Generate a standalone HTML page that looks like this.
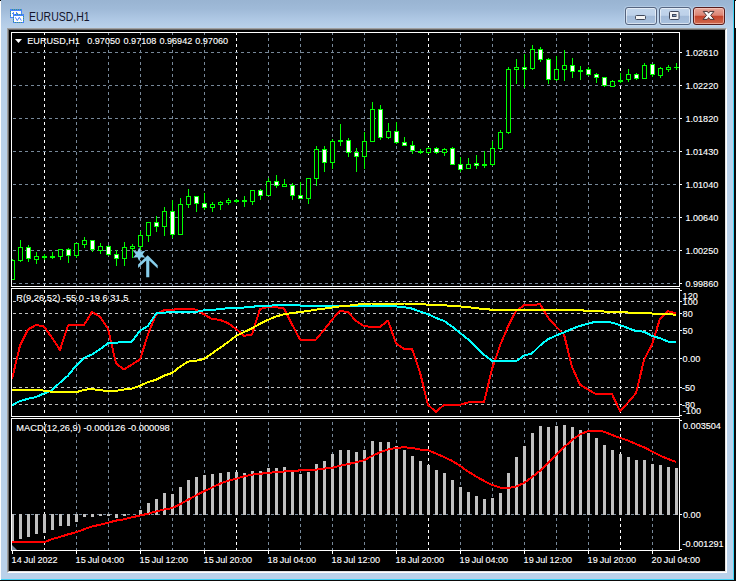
<!DOCTYPE html>
<html lang="en">
<head>
<meta charset="utf-8">
<title>EURUSD,H1</title>
<style>
html,body{margin:0;padding:0;background:#000;}
body{width:736px;height:581px;overflow:hidden;position:relative;font-family:"Liberation Sans",Arial,sans-serif;}
.window{position:absolute;left:0;top:0;width:736px;height:581px;background:#b9d1ea;overflow:hidden;}
.titlebar{position:absolute;left:0;top:0;width:736px;height:28px;background:linear-gradient(#99b4d2 0,#9fbad8 9px,#b0c9e5 20px,#b9d1ea 28px);}
.edge-l{position:absolute;left:0;top:1px;width:1px;height:580px;background:#fdfdfd;}
.edge-tl{position:absolute;left:0;top:0;width:1px;height:1px;background:#000;}
.edge-r1{position:absolute;left:733px;top:0;width:1px;height:580px;background:#3fd2f5;}
.edge-r2{position:absolute;left:734px;top:0;width:2px;height:581px;background:#0a0a0a;}
.edge-r3{position:absolute;left:735px;top:1px;width:1px;height:27px;background:#fbfbfb;}
.edge-b1{position:absolute;left:1px;top:579px;width:733px;height:1px;background:#3fd2f5;}
.edge-b2{position:absolute;left:0;top:580px;width:736px;height:1px;background:#0a0a0a;}
.client{position:absolute;left:7px;top:28px;width:716px;height:541px;border-style:solid;border-width:2px;border-color:#a0a0a0 #fff #fff #a0a0a0;background:#000;}
.client:before{content:"";position:absolute;left:-1px;top:-1px;right:-1px;bottom:-1px;border-style:solid;border-width:1px;border-color:#696969 #e3e3e3 #e3e3e3 #696969;}
.title{position:absolute;left:29px;top:9px;height:16px;line-height:16px;font-size:12.5px;color:#14142a;white-space:nowrap;transform-origin:0 50%;transform:scaleX(.84);}
.icon{position:absolute;left:9px;top:8px;width:17px;height:16px;}
.btn{position:absolute;top:7px;width:30px;height:16px;border:1px solid #55647f;border-radius:3px;box-shadow:inset 0 0 0 1px rgba(255,255,255,.55),0 0 0 1px rgba(220,235,250,.35);background:linear-gradient(#c3d6ec 0,#bdd1e9 46%,#a2bad8 50%,#a9c1de 100%);}
.btn.min{left:625px;}
.btn.max{left:659px;}
.btn.close{left:693px;border-color:#571b1b;box-shadow:inset 0 0 0 1px rgba(255,210,200,.6),0 0 0 1px rgba(220,235,250,.35);background:linear-gradient(#e7a99c 0,#dc8474 46%,#c4422a 50%,#cf6a50 100%);}
.btn svg{position:absolute;left:0;top:0;}
svg.chart{position:absolute;left:0;top:0;}
</style>
</head>
<body>
<div class="window">
  <div class="titlebar">
    <svg class="icon" viewBox="9 8 17 16">
      <g shape-rendering="crispEdges">
      <rect x="10" y="9" width="12" height="9" fill="#4783ff"/>
      <rect x="11" y="11" width="10" height="6" fill="#fffef2"/>
      <path d="M12 13.5h1 M13 12.5h1 M13 13.5h1 M16 12.5h1 M16 13.5h2 M17 14.5h1" stroke="#4783ff" fill="none"/>
      <rect x="13" y="14" width="11" height="9" fill="#4783ff"/>
      <rect x="14" y="16" width="9" height="6" fill="#ffffff"/>
      <path d="M12 9.5h1M14 9.5h1M16 9.5h1M18 9.5h1M20 9.5h1 M10.5 11v1M10.5 13v1M10.5 15v1 M15 14.5h1M17 14.5h1M19 14.5h1M21 14.5h1M13.5 17v1M13.5 19v1M13.5 21v1 M23.5 16v1M23.5 18v1M23.5 20v1 M15 22.5h1M17 22.5h1M19 22.5h1M21 22.5h1" stroke="#3f9a7a" fill="none"/>
      </g>
      <path d="M15.3 17.3 L17.3 20.6 L19.3 17.3 L21.4 20.6" stroke="#4783ff" stroke-width="1" fill="none"/>
    </svg>
    <span class="title">EURUSD,H1</span>
    <div class="btn min"><svg width="30" height="16" viewBox="0 0 30 16"><rect x="9.5" y="7.5" width="10" height="4" rx="1" fill="#f4f4f4" stroke="#40485a"/></svg></div>
    <div class="btn max"><svg width="30" height="16" viewBox="0 0 30 16"><rect x="9.5" y="3.5" width="9.5" height="8" rx="1" fill="#f4f4f4" stroke="#40485a"/><rect x="12.5" y="6.5" width="3.5" height="2" fill="#7f97b8" stroke="#40485a"/></svg></div>
    <div class="btn close"><svg width="30" height="16" viewBox="0 0 30 16"><path d="M9.2 3.4 H13.4 L14.6 5.2 L15.8 3.4 H20 L16.7 7.4 L20.2 11.4 H15.9 L14.6 9.6 L13.3 11.4 H9 L12.5 7.4 Z" fill="#fafafa" stroke="#4a3434" stroke-width="1" stroke-linejoin="round"/></svg></div>
  </div>
  <div class="client"></div>
  <div class="edge-l"></div><div class="edge-tl"></div>
  <div class="edge-r1"></div><div class="edge-r2"></div><div class="edge-r3"></div><div class="edge-b1"></div><div class="edge-b2"></div>
  <svg class="chart" width="736" height="581" viewBox="0 0 736 581">
<defs>
<clipPath id="cm"><rect x="12" y="33" width="667" height="253"/></clipPath>
<clipPath id="c1"><rect x="12" y="289" width="667" height="127"/></clipPath>
<clipPath id="c2"><rect x="12" y="419" width="667" height="131"/></clipPath>
</defs>
<rect x="9" y="30" width="716" height="541" fill="#000"/>
<g shape-rendering="crispEdges" fill="none" stroke-width="1">
<line x1="44.5" y1="33" x2="44.5" y2="286" stroke="#ffffff" stroke-dasharray="3 3" stroke-dashoffset="1"/>
<line x1="44.5" y1="289" x2="44.5" y2="416" stroke="#ffffff" stroke-dasharray="3 3" stroke-dashoffset="5"/>
<line x1="44.5" y1="419" x2="44.5" y2="550" stroke="#ffffff" stroke-dasharray="3 3" stroke-dashoffset="3"/>
<line x1="76.5" y1="33" x2="76.5" y2="286" stroke="#778899" stroke-dasharray="3 3" stroke-dashoffset="1"/>
<line x1="76.5" y1="289" x2="76.5" y2="416" stroke="#778899" stroke-dasharray="3 3" stroke-dashoffset="5"/>
<line x1="76.5" y1="419" x2="76.5" y2="550" stroke="#778899" stroke-dasharray="3 3" stroke-dashoffset="3"/>
<line x1="108.5" y1="33" x2="108.5" y2="286" stroke="#778899" stroke-dasharray="3 3" stroke-dashoffset="1"/>
<line x1="108.5" y1="289" x2="108.5" y2="416" stroke="#778899" stroke-dasharray="3 3" stroke-dashoffset="5"/>
<line x1="108.5" y1="419" x2="108.5" y2="550" stroke="#778899" stroke-dasharray="3 3" stroke-dashoffset="3"/>
<line x1="140.5" y1="33" x2="140.5" y2="286" stroke="#778899" stroke-dasharray="3 3" stroke-dashoffset="1"/>
<line x1="140.5" y1="289" x2="140.5" y2="416" stroke="#778899" stroke-dasharray="3 3" stroke-dashoffset="5"/>
<line x1="140.5" y1="419" x2="140.5" y2="550" stroke="#778899" stroke-dasharray="3 3" stroke-dashoffset="3"/>
<line x1="172.5" y1="33" x2="172.5" y2="286" stroke="#778899" stroke-dasharray="3 3" stroke-dashoffset="1"/>
<line x1="172.5" y1="289" x2="172.5" y2="416" stroke="#778899" stroke-dasharray="3 3" stroke-dashoffset="5"/>
<line x1="172.5" y1="419" x2="172.5" y2="550" stroke="#778899" stroke-dasharray="3 3" stroke-dashoffset="3"/>
<line x1="204.5" y1="33" x2="204.5" y2="286" stroke="#778899" stroke-dasharray="3 3" stroke-dashoffset="1"/>
<line x1="204.5" y1="289" x2="204.5" y2="416" stroke="#778899" stroke-dasharray="3 3" stroke-dashoffset="5"/>
<line x1="204.5" y1="419" x2="204.5" y2="550" stroke="#778899" stroke-dasharray="3 3" stroke-dashoffset="3"/>
<line x1="236.5" y1="33" x2="236.5" y2="286" stroke="#ffffff" stroke-dasharray="3 3" stroke-dashoffset="1"/>
<line x1="236.5" y1="289" x2="236.5" y2="416" stroke="#ffffff" stroke-dasharray="3 3" stroke-dashoffset="5"/>
<line x1="236.5" y1="419" x2="236.5" y2="550" stroke="#ffffff" stroke-dasharray="3 3" stroke-dashoffset="3"/>
<line x1="268.5" y1="33" x2="268.5" y2="286" stroke="#778899" stroke-dasharray="3 3" stroke-dashoffset="1"/>
<line x1="268.5" y1="289" x2="268.5" y2="416" stroke="#778899" stroke-dasharray="3 3" stroke-dashoffset="5"/>
<line x1="268.5" y1="419" x2="268.5" y2="550" stroke="#778899" stroke-dasharray="3 3" stroke-dashoffset="3"/>
<line x1="300.5" y1="33" x2="300.5" y2="286" stroke="#778899" stroke-dasharray="3 3" stroke-dashoffset="1"/>
<line x1="300.5" y1="289" x2="300.5" y2="416" stroke="#778899" stroke-dasharray="3 3" stroke-dashoffset="5"/>
<line x1="300.5" y1="419" x2="300.5" y2="550" stroke="#778899" stroke-dasharray="3 3" stroke-dashoffset="3"/>
<line x1="332.5" y1="33" x2="332.5" y2="286" stroke="#778899" stroke-dasharray="3 3" stroke-dashoffset="1"/>
<line x1="332.5" y1="289" x2="332.5" y2="416" stroke="#778899" stroke-dasharray="3 3" stroke-dashoffset="5"/>
<line x1="332.5" y1="419" x2="332.5" y2="550" stroke="#778899" stroke-dasharray="3 3" stroke-dashoffset="3"/>
<line x1="364.5" y1="33" x2="364.5" y2="286" stroke="#778899" stroke-dasharray="3 3" stroke-dashoffset="1"/>
<line x1="364.5" y1="289" x2="364.5" y2="416" stroke="#778899" stroke-dasharray="3 3" stroke-dashoffset="5"/>
<line x1="364.5" y1="419" x2="364.5" y2="550" stroke="#778899" stroke-dasharray="3 3" stroke-dashoffset="3"/>
<line x1="396.5" y1="33" x2="396.5" y2="286" stroke="#778899" stroke-dasharray="3 3" stroke-dashoffset="1"/>
<line x1="396.5" y1="289" x2="396.5" y2="416" stroke="#778899" stroke-dasharray="3 3" stroke-dashoffset="5"/>
<line x1="396.5" y1="419" x2="396.5" y2="550" stroke="#778899" stroke-dasharray="3 3" stroke-dashoffset="3"/>
<line x1="428.5" y1="33" x2="428.5" y2="286" stroke="#ffffff" stroke-dasharray="3 3" stroke-dashoffset="1"/>
<line x1="428.5" y1="289" x2="428.5" y2="416" stroke="#ffffff" stroke-dasharray="3 3" stroke-dashoffset="5"/>
<line x1="428.5" y1="419" x2="428.5" y2="550" stroke="#ffffff" stroke-dasharray="3 3" stroke-dashoffset="3"/>
<line x1="460.5" y1="33" x2="460.5" y2="286" stroke="#778899" stroke-dasharray="3 3" stroke-dashoffset="1"/>
<line x1="460.5" y1="289" x2="460.5" y2="416" stroke="#778899" stroke-dasharray="3 3" stroke-dashoffset="5"/>
<line x1="460.5" y1="419" x2="460.5" y2="550" stroke="#778899" stroke-dasharray="3 3" stroke-dashoffset="3"/>
<line x1="492.5" y1="33" x2="492.5" y2="286" stroke="#778899" stroke-dasharray="3 3" stroke-dashoffset="1"/>
<line x1="492.5" y1="289" x2="492.5" y2="416" stroke="#778899" stroke-dasharray="3 3" stroke-dashoffset="5"/>
<line x1="492.5" y1="419" x2="492.5" y2="550" stroke="#778899" stroke-dasharray="3 3" stroke-dashoffset="3"/>
<line x1="524.5" y1="33" x2="524.5" y2="286" stroke="#778899" stroke-dasharray="3 3" stroke-dashoffset="1"/>
<line x1="524.5" y1="289" x2="524.5" y2="416" stroke="#778899" stroke-dasharray="3 3" stroke-dashoffset="5"/>
<line x1="524.5" y1="419" x2="524.5" y2="550" stroke="#778899" stroke-dasharray="3 3" stroke-dashoffset="3"/>
<line x1="556.5" y1="33" x2="556.5" y2="286" stroke="#778899" stroke-dasharray="3 3" stroke-dashoffset="1"/>
<line x1="556.5" y1="289" x2="556.5" y2="416" stroke="#778899" stroke-dasharray="3 3" stroke-dashoffset="5"/>
<line x1="556.5" y1="419" x2="556.5" y2="550" stroke="#778899" stroke-dasharray="3 3" stroke-dashoffset="3"/>
<line x1="588.5" y1="33" x2="588.5" y2="286" stroke="#778899" stroke-dasharray="3 3" stroke-dashoffset="1"/>
<line x1="588.5" y1="289" x2="588.5" y2="416" stroke="#778899" stroke-dasharray="3 3" stroke-dashoffset="5"/>
<line x1="588.5" y1="419" x2="588.5" y2="550" stroke="#778899" stroke-dasharray="3 3" stroke-dashoffset="3"/>
<line x1="620.5" y1="33" x2="620.5" y2="286" stroke="#ffffff" stroke-dasharray="3 3" stroke-dashoffset="1"/>
<line x1="620.5" y1="289" x2="620.5" y2="416" stroke="#ffffff" stroke-dasharray="3 3" stroke-dashoffset="5"/>
<line x1="620.5" y1="419" x2="620.5" y2="550" stroke="#ffffff" stroke-dasharray="3 3" stroke-dashoffset="3"/>
<line x1="652.5" y1="33" x2="652.5" y2="286" stroke="#778899" stroke-dasharray="3 3" stroke-dashoffset="1"/>
<line x1="652.5" y1="289" x2="652.5" y2="416" stroke="#778899" stroke-dasharray="3 3" stroke-dashoffset="5"/>
<line x1="652.5" y1="419" x2="652.5" y2="550" stroke="#778899" stroke-dasharray="3 3" stroke-dashoffset="3"/>
<line x1="12" y1="52.5" x2="679" y2="52.5" stroke="#778899" stroke-dasharray="3 3" stroke-dashoffset="5"/>
<line x1="12" y1="85.5" x2="679" y2="85.5" stroke="#778899" stroke-dasharray="3 3" stroke-dashoffset="5"/>
<line x1="12" y1="118.5" x2="679" y2="118.5" stroke="#778899" stroke-dasharray="3 3" stroke-dashoffset="5"/>
<line x1="12" y1="151.5" x2="679" y2="151.5" stroke="#778899" stroke-dasharray="3 3" stroke-dashoffset="5"/>
<line x1="12" y1="184.5" x2="679" y2="184.5" stroke="#778899" stroke-dasharray="3 3" stroke-dashoffset="5"/>
<line x1="12" y1="217.5" x2="679" y2="217.5" stroke="#778899" stroke-dasharray="3 3" stroke-dashoffset="5"/>
<line x1="12" y1="250.5" x2="679" y2="250.5" stroke="#778899" stroke-dasharray="3 3" stroke-dashoffset="5"/>
<line x1="12" y1="283.5" x2="679" y2="283.5" stroke="#778899" stroke-dasharray="3 3" stroke-dashoffset="5"/>
<line x1="12" y1="301.5" x2="679" y2="301.5" stroke="#c0c0c0" stroke-dasharray="3 3" stroke-dashoffset="5"/>
<line x1="12" y1="313.5" x2="679" y2="313.5" stroke="#c0c0c0" stroke-dasharray="3 3" stroke-dashoffset="5"/>
<line x1="12" y1="330.5" x2="679" y2="330.5" stroke="#c0c0c0" stroke-dasharray="3 3" stroke-dashoffset="5"/>
<line x1="12" y1="358.5" x2="679" y2="358.5" stroke="#c0c0c0" stroke-dasharray="3 3" stroke-dashoffset="5"/>
<line x1="12" y1="387.5" x2="679" y2="387.5" stroke="#c0c0c0" stroke-dasharray="3 3" stroke-dashoffset="5"/>
<line x1="12" y1="404.5" x2="679" y2="404.5" stroke="#c0c0c0" stroke-dasharray="3 3" stroke-dashoffset="5"/>
<line x1="12" y1="514.5" x2="679" y2="514.5" stroke="#778899" stroke-dasharray="3 3" stroke-dashoffset="5"/>
</g>
<g shape-rendering="crispEdges" clip-path="url(#cm)">
<rect x="12" y="259" width="1" height="21" fill="#00ff00"/>
<rect x="10" y="260" width="5" height="20" fill="#00ff00"/>
<rect x="11" y="261" width="3" height="18" fill="#000"/>
<rect x="20" y="240" width="1" height="22" fill="#00ff00"/>
<rect x="18" y="247" width="5" height="14" fill="#00ff00"/>
<rect x="19" y="248" width="3" height="12" fill="#000"/>
<rect x="28" y="245" width="1" height="17" fill="#00ff00"/>
<rect x="26" y="247" width="5" height="12" fill="#00ff00"/>
<rect x="27" y="248" width="3" height="10" fill="#fff"/>
<rect x="36" y="252" width="1" height="12" fill="#00ff00"/>
<rect x="34" y="256" width="5" height="4" fill="#00ff00"/>
<rect x="35" y="257" width="3" height="2" fill="#000"/>
<rect x="44" y="254" width="1" height="6" fill="#00ff00"/>
<rect x="42" y="256" width="5" height="2" fill="#00ff00"/>
<rect x="52" y="252" width="1" height="7" fill="#00ff00"/>
<rect x="50" y="256" width="5" height="2" fill="#00ff00"/>
<rect x="60" y="249" width="1" height="11" fill="#00ff00"/>
<rect x="58" y="249" width="5" height="8" fill="#00ff00"/>
<rect x="59" y="250" width="3" height="6" fill="#000"/>
<rect x="68" y="248" width="1" height="15" fill="#00ff00"/>
<rect x="66" y="249" width="5" height="7" fill="#00ff00"/>
<rect x="67" y="250" width="3" height="5" fill="#fff"/>
<rect x="76" y="243" width="1" height="15" fill="#00ff00"/>
<rect x="74" y="243" width="5" height="13" fill="#00ff00"/>
<rect x="75" y="244" width="3" height="11" fill="#000"/>
<rect x="84" y="237" width="1" height="11" fill="#00ff00"/>
<rect x="82" y="240" width="5" height="5" fill="#00ff00"/>
<rect x="83" y="241" width="3" height="3" fill="#000"/>
<rect x="92" y="240" width="1" height="12" fill="#00ff00"/>
<rect x="90" y="240" width="5" height="10" fill="#00ff00"/>
<rect x="91" y="241" width="3" height="8" fill="#fff"/>
<rect x="100" y="243" width="1" height="11" fill="#00ff00"/>
<rect x="98" y="246" width="5" height="5" fill="#00ff00"/>
<rect x="99" y="247" width="3" height="3" fill="#000"/>
<rect x="108" y="245" width="1" height="11" fill="#00ff00"/>
<rect x="106" y="246" width="5" height="9" fill="#00ff00"/>
<rect x="107" y="247" width="3" height="7" fill="#fff"/>
<rect x="116" y="250" width="1" height="16" fill="#00ff00"/>
<rect x="114" y="254" width="5" height="5" fill="#00ff00"/>
<rect x="115" y="255" width="3" height="3" fill="#fff"/>
<rect x="124" y="242" width="1" height="24" fill="#00ff00"/>
<rect x="122" y="247" width="5" height="12" fill="#00ff00"/>
<rect x="123" y="248" width="3" height="10" fill="#000"/>
<rect x="132" y="244" width="1" height="14" fill="#00ff00"/>
<rect x="130" y="246" width="5" height="3" fill="#00ff00"/>
<rect x="131" y="247" width="3" height="1" fill="#000"/>
<rect x="140" y="231" width="1" height="19" fill="#00ff00"/>
<rect x="138" y="235" width="5" height="12" fill="#00ff00"/>
<rect x="139" y="236" width="3" height="10" fill="#000"/>
<rect x="148" y="222" width="1" height="20" fill="#00ff00"/>
<rect x="146" y="222" width="5" height="14" fill="#00ff00"/>
<rect x="147" y="223" width="3" height="12" fill="#000"/>
<rect x="156" y="216" width="1" height="16" fill="#00ff00"/>
<rect x="154" y="222" width="5" height="5" fill="#00ff00"/>
<rect x="155" y="223" width="3" height="3" fill="#fff"/>
<rect x="164" y="207" width="1" height="29" fill="#00ff00"/>
<rect x="162" y="211" width="5" height="16" fill="#00ff00"/>
<rect x="163" y="212" width="3" height="14" fill="#000"/>
<rect x="172" y="200" width="1" height="38" fill="#00ff00"/>
<rect x="170" y="211" width="5" height="24" fill="#00ff00"/>
<rect x="171" y="212" width="3" height="22" fill="#fff"/>
<rect x="180" y="198" width="1" height="37" fill="#00ff00"/>
<rect x="178" y="204" width="5" height="31" fill="#00ff00"/>
<rect x="179" y="205" width="3" height="29" fill="#000"/>
<rect x="188" y="189" width="1" height="19" fill="#00ff00"/>
<rect x="186" y="196" width="5" height="9" fill="#00ff00"/>
<rect x="187" y="197" width="3" height="7" fill="#000"/>
<rect x="196" y="196" width="1" height="16" fill="#00ff00"/>
<rect x="194" y="196" width="5" height="8" fill="#00ff00"/>
<rect x="195" y="197" width="3" height="6" fill="#fff"/>
<rect x="204" y="193" width="1" height="17" fill="#00ff00"/>
<rect x="202" y="203" width="5" height="5" fill="#00ff00"/>
<rect x="203" y="204" width="3" height="3" fill="#fff"/>
<rect x="212" y="202" width="1" height="10" fill="#00ff00"/>
<rect x="210" y="204" width="5" height="4" fill="#00ff00"/>
<rect x="211" y="205" width="3" height="2" fill="#000"/>
<rect x="220" y="201" width="1" height="9" fill="#00ff00"/>
<rect x="218" y="202" width="5" height="3" fill="#00ff00"/>
<rect x="219" y="203" width="3" height="1" fill="#000"/>
<rect x="228" y="198" width="1" height="7" fill="#00ff00"/>
<rect x="226" y="200" width="5" height="3" fill="#00ff00"/>
<rect x="227" y="201" width="3" height="1" fill="#000"/>
<rect x="236" y="199" width="1" height="4" fill="#00ff00"/>
<rect x="234" y="200" width="5" height="2" fill="#00ff00"/>
<rect x="244" y="196" width="1" height="11" fill="#00ff00"/>
<rect x="242" y="200" width="5" height="2" fill="#00ff00"/>
<rect x="252" y="190" width="1" height="15" fill="#00ff00"/>
<rect x="250" y="190" width="5" height="12" fill="#00ff00"/>
<rect x="251" y="191" width="3" height="10" fill="#000"/>
<rect x="260" y="189" width="1" height="11" fill="#00ff00"/>
<rect x="258" y="190" width="5" height="6" fill="#00ff00"/>
<rect x="259" y="191" width="3" height="4" fill="#fff"/>
<rect x="268" y="178" width="1" height="18" fill="#00ff00"/>
<rect x="266" y="181" width="5" height="15" fill="#00ff00"/>
<rect x="267" y="182" width="3" height="13" fill="#000"/>
<rect x="276" y="175" width="1" height="13" fill="#00ff00"/>
<rect x="274" y="181" width="5" height="5" fill="#00ff00"/>
<rect x="275" y="182" width="3" height="3" fill="#fff"/>
<rect x="284" y="179" width="1" height="8" fill="#00ff00"/>
<rect x="282" y="184" width="5" height="3" fill="#00ff00"/>
<rect x="283" y="185" width="3" height="1" fill="#000"/>
<rect x="292" y="183" width="1" height="17" fill="#00ff00"/>
<rect x="290" y="185" width="5" height="11" fill="#00ff00"/>
<rect x="291" y="186" width="3" height="9" fill="#fff"/>
<rect x="300" y="182" width="1" height="17" fill="#00ff00"/>
<rect x="298" y="195" width="5" height="4" fill="#00ff00"/>
<rect x="299" y="196" width="3" height="2" fill="#fff"/>
<rect x="308" y="178" width="1" height="26" fill="#00ff00"/>
<rect x="306" y="178" width="5" height="21" fill="#00ff00"/>
<rect x="307" y="179" width="3" height="19" fill="#000"/>
<rect x="316" y="146" width="1" height="40" fill="#00ff00"/>
<rect x="314" y="149" width="5" height="30" fill="#00ff00"/>
<rect x="315" y="150" width="3" height="28" fill="#000"/>
<rect x="324" y="146" width="1" height="26" fill="#00ff00"/>
<rect x="322" y="149" width="5" height="14" fill="#00ff00"/>
<rect x="323" y="150" width="3" height="12" fill="#fff"/>
<rect x="332" y="139" width="1" height="30" fill="#00ff00"/>
<rect x="330" y="141" width="5" height="22" fill="#00ff00"/>
<rect x="331" y="142" width="3" height="20" fill="#000"/>
<rect x="340" y="124" width="1" height="22" fill="#00ff00"/>
<rect x="338" y="140" width="5" height="2" fill="#00ff00"/>
<rect x="348" y="138" width="1" height="19" fill="#00ff00"/>
<rect x="346" y="140" width="5" height="13" fill="#00ff00"/>
<rect x="347" y="141" width="3" height="11" fill="#fff"/>
<rect x="356" y="148" width="1" height="24" fill="#00ff00"/>
<rect x="354" y="152" width="5" height="5" fill="#00ff00"/>
<rect x="355" y="153" width="3" height="3" fill="#fff"/>
<rect x="364" y="132" width="1" height="37" fill="#00ff00"/>
<rect x="362" y="141" width="5" height="16" fill="#00ff00"/>
<rect x="363" y="142" width="3" height="14" fill="#000"/>
<rect x="372" y="102" width="1" height="40" fill="#00ff00"/>
<rect x="370" y="109" width="5" height="33" fill="#00ff00"/>
<rect x="371" y="110" width="3" height="31" fill="#000"/>
<rect x="380" y="105" width="1" height="35" fill="#00ff00"/>
<rect x="378" y="109" width="5" height="29" fill="#00ff00"/>
<rect x="379" y="110" width="3" height="27" fill="#fff"/>
<rect x="388" y="123" width="1" height="16" fill="#00ff00"/>
<rect x="386" y="131" width="5" height="7" fill="#00ff00"/>
<rect x="387" y="132" width="3" height="5" fill="#000"/>
<rect x="396" y="122" width="1" height="22" fill="#00ff00"/>
<rect x="394" y="131" width="5" height="12" fill="#00ff00"/>
<rect x="395" y="132" width="3" height="10" fill="#fff"/>
<rect x="404" y="137" width="1" height="9" fill="#00ff00"/>
<rect x="402" y="142" width="5" height="4" fill="#00ff00"/>
<rect x="403" y="143" width="3" height="2" fill="#fff"/>
<rect x="412" y="141" width="1" height="13" fill="#00ff00"/>
<rect x="410" y="145" width="5" height="6" fill="#00ff00"/>
<rect x="411" y="146" width="3" height="4" fill="#fff"/>
<rect x="420" y="149" width="1" height="5" fill="#00ff00"/>
<rect x="418" y="151" width="5" height="2" fill="#00ff00"/>
<rect x="428" y="147" width="1" height="7" fill="#00ff00"/>
<rect x="426" y="148" width="5" height="5" fill="#00ff00"/>
<rect x="427" y="149" width="3" height="3" fill="#000"/>
<rect x="436" y="147" width="1" height="7" fill="#00ff00"/>
<rect x="434" y="148" width="5" height="5" fill="#00ff00"/>
<rect x="435" y="149" width="3" height="3" fill="#fff"/>
<rect x="444" y="148" width="1" height="8" fill="#00ff00"/>
<rect x="442" y="149" width="5" height="4" fill="#00ff00"/>
<rect x="443" y="150" width="3" height="2" fill="#000"/>
<rect x="452" y="147" width="1" height="18" fill="#00ff00"/>
<rect x="450" y="148" width="5" height="17" fill="#00ff00"/>
<rect x="451" y="149" width="3" height="15" fill="#fff"/>
<rect x="460" y="157" width="1" height="15" fill="#00ff00"/>
<rect x="458" y="164" width="5" height="6" fill="#00ff00"/>
<rect x="459" y="165" width="3" height="4" fill="#fff"/>
<rect x="468" y="158" width="1" height="11" fill="#00ff00"/>
<rect x="466" y="164" width="5" height="5" fill="#00ff00"/>
<rect x="467" y="165" width="3" height="3" fill="#000"/>
<rect x="476" y="155" width="1" height="14" fill="#00ff00"/>
<rect x="474" y="163" width="5" height="3" fill="#00ff00"/>
<rect x="475" y="164" width="3" height="1" fill="#fff"/>
<rect x="484" y="151" width="1" height="17" fill="#00ff00"/>
<rect x="482" y="164" width="5" height="2" fill="#00ff00"/>
<rect x="492" y="141" width="1" height="25" fill="#00ff00"/>
<rect x="490" y="148" width="5" height="17" fill="#00ff00"/>
<rect x="491" y="149" width="3" height="15" fill="#000"/>
<rect x="500" y="130" width="1" height="20" fill="#00ff00"/>
<rect x="498" y="132" width="5" height="17" fill="#00ff00"/>
<rect x="499" y="133" width="3" height="15" fill="#000"/>
<rect x="508" y="67" width="1" height="67" fill="#00ff00"/>
<rect x="506" y="69" width="5" height="64" fill="#00ff00"/>
<rect x="507" y="70" width="3" height="62" fill="#000"/>
<rect x="516" y="59" width="1" height="25" fill="#00ff00"/>
<rect x="514" y="67" width="5" height="3" fill="#00ff00"/>
<rect x="515" y="68" width="3" height="1" fill="#000"/>
<rect x="524" y="54" width="1" height="34" fill="#00ff00"/>
<rect x="522" y="67" width="5" height="3" fill="#00ff00"/>
<rect x="523" y="68" width="3" height="1" fill="#fff"/>
<rect x="532" y="45" width="1" height="25" fill="#00ff00"/>
<rect x="530" y="49" width="5" height="20" fill="#00ff00"/>
<rect x="531" y="50" width="3" height="18" fill="#000"/>
<rect x="540" y="47" width="1" height="15" fill="#00ff00"/>
<rect x="538" y="49" width="5" height="11" fill="#00ff00"/>
<rect x="539" y="50" width="3" height="9" fill="#fff"/>
<rect x="548" y="58" width="1" height="26" fill="#00ff00"/>
<rect x="546" y="59" width="5" height="21" fill="#00ff00"/>
<rect x="547" y="60" width="3" height="19" fill="#fff"/>
<rect x="556" y="56" width="1" height="25" fill="#00ff00"/>
<rect x="554" y="69" width="5" height="11" fill="#00ff00"/>
<rect x="555" y="70" width="3" height="9" fill="#000"/>
<rect x="564" y="50" width="1" height="31" fill="#00ff00"/>
<rect x="562" y="65" width="5" height="5" fill="#00ff00"/>
<rect x="563" y="66" width="3" height="3" fill="#000"/>
<rect x="572" y="58" width="1" height="20" fill="#00ff00"/>
<rect x="570" y="65" width="5" height="7" fill="#00ff00"/>
<rect x="571" y="66" width="3" height="5" fill="#fff"/>
<rect x="580" y="66" width="1" height="14" fill="#00ff00"/>
<rect x="578" y="70" width="5" height="2" fill="#00ff00"/>
<rect x="588" y="67" width="1" height="9" fill="#00ff00"/>
<rect x="586" y="69" width="5" height="6" fill="#00ff00"/>
<rect x="587" y="70" width="3" height="4" fill="#fff"/>
<rect x="596" y="73" width="1" height="10" fill="#00ff00"/>
<rect x="594" y="74" width="5" height="4" fill="#00ff00"/>
<rect x="595" y="75" width="3" height="2" fill="#fff"/>
<rect x="604" y="77" width="1" height="10" fill="#00ff00"/>
<rect x="602" y="77" width="5" height="9" fill="#00ff00"/>
<rect x="603" y="78" width="3" height="7" fill="#fff"/>
<rect x="612" y="80" width="1" height="7" fill="#00ff00"/>
<rect x="610" y="81" width="5" height="6" fill="#00ff00"/>
<rect x="611" y="82" width="3" height="4" fill="#000"/>
<rect x="620" y="73" width="1" height="10" fill="#00ff00"/>
<rect x="618" y="80" width="5" height="2" fill="#00ff00"/>
<rect x="628" y="69" width="1" height="13" fill="#00ff00"/>
<rect x="626" y="74" width="5" height="6" fill="#00ff00"/>
<rect x="627" y="75" width="3" height="4" fill="#000"/>
<rect x="636" y="73" width="1" height="7" fill="#00ff00"/>
<rect x="634" y="74" width="5" height="5" fill="#00ff00"/>
<rect x="635" y="75" width="3" height="3" fill="#fff"/>
<rect x="644" y="63" width="1" height="16" fill="#00ff00"/>
<rect x="642" y="65" width="5" height="14" fill="#00ff00"/>
<rect x="643" y="66" width="3" height="12" fill="#000"/>
<rect x="652" y="64" width="1" height="13" fill="#00ff00"/>
<rect x="650" y="64" width="5" height="11" fill="#00ff00"/>
<rect x="651" y="65" width="3" height="9" fill="#fff"/>
<rect x="660" y="67" width="1" height="11" fill="#00ff00"/>
<rect x="658" y="68" width="5" height="8" fill="#00ff00"/>
<rect x="659" y="69" width="3" height="6" fill="#000"/>
<rect x="668" y="65" width="1" height="7" fill="#00ff00"/>
<rect x="666" y="67" width="5" height="3" fill="#00ff00"/>
<rect x="667" y="68" width="3" height="1" fill="#000"/>
<rect x="676" y="63" width="1" height="7" fill="#00ff00"/>
<rect x="674" y="67" width="5" height="1" fill="#00ff00"/>
</g>
<g fill="#87ceeb" stroke="none">
<polygon points="139.2,247.3 140.9,251.4 145.3,250.8 142.6,254.3 145.3,257.8 140.9,257.2 139.2,261.3 137.5,257.2 133.1,257.8 135.8,254.3 133.1,250.8 137.5,251.4"/>
<path d="M147.7 255.3 L157.7 265.2 L157.7 268.6 L149.3 260.4 L149.3 277.2 L146.2 277.2 L146.2 260.4 L138.1 268.1 L138.1 264.6 Z"/>
</g>
<polyline clip-path="url(#c1)" shape-rendering="crispEdges" points="12,379.1 20,345.5 28,329.5 36,325 44,326.5 52,337.7 60,350 68,325.5 76,325 84,325 92,312 100,316.5 108,328.8 116,363.5 124,369.5 132,364.5 140,359.5 148,334.5 156,314.2 164,310.2 172,309.7 180,309.1 188,308.6 196,309.7 204,314.2 212,319.1 220,319.8 228,323.2 236,328.8 244,335.9 252,334.4 260,309.1 268,306.8 276,307.1 284,308.6 292,324.3 300,339.5 308,339.5 316,339.5 324,329.9 332,319.8 340,310.9 348,312 356,320.9 364,326.1 372,327 380,327 388,320.5 396,343.3 404,348.9 412,348.9 420,372.4 428,404.8 436,412 444,404.8 452,404.8 460,404.8 468,402.5 476,401.5 484,402.1 492,369 500,345.5 508,326.5 516,310.9 524,305.3 532,305.3 540,304 548,317.5 556,326.5 564,334.4 572,366.8 580,384.7 588,389.5 596,394.1 604,394.1 612,394.1 620,411.1 628,402.5 636,393.2 644,360.1 652,344.4 660,318.7 668,311.3 676,313.1" fill="none" stroke="#ff0000" stroke-width="2" stroke-linejoin="round"/>
<polyline clip-path="url(#c1)" shape-rendering="crispEdges" points="12,405.2 20,401 28,398.8 36,397 44,393.5 52,390.3 60,382.5 68,375.7 76,365.7 84,357.8 92,354.5 100,349.3 108,343.3 116,342.8 124,341.5 132,341.5 140,330.7 148,326 156,313.5 164,312.7 172,312 180,312 188,312 196,312 204,310.2 212,309.7 220,309.3 228,308 236,307.5 244,307.5 252,306.8 260,305.9 268,305.7 276,305.3 284,304.8 292,305.3 300,305.5 308,305.5 316,305.5 324,305.5 332,305.5 340,305.5 348,305.7 356,306.4 364,306.4 372,306.4 380,306.4 388,306.4 396,306.4 404,307.1 412,308.6 420,311.5 428,314.2 436,318 444,320.9 452,326.5 460,332.8 468,339.3 476,346.7 484,354.9 492,360.7 500,361.2 508,361.2 516,361.2 524,355.6 532,353.4 540,345.5 548,339.3 556,335.5 564,332.5 572,328.8 580,325.9 588,323.8 596,321.5 604,321.5 612,322.7 620,325 628,328.1 636,331 644,331.7 652,335.9 660,338.2 668,341.5 676,342.5" fill="none" stroke="#00ffff" stroke-width="2" stroke-linejoin="round"/>
<polyline clip-path="url(#c1)" shape-rendering="crispEdges" points="12,389.5 20,389.5 28,389.5 36,389.5 44,390.7 52,391.8 60,392.3 68,392.3 76,392.3 84,389.8 92,389.1 100,390.3 108,390.9 116,390.9 124,389.5 132,388.5 140,385.8 148,382 156,379.8 164,375.7 172,373 180,366.8 188,361.6 196,360.7 204,359 212,353.4 220,347.8 228,342.2 236,335.9 244,332.1 252,328.3 260,323.8 268,319.8 276,316.5 284,314.2 292,313.1 300,312 308,310.9 316,309.7 324,308.6 332,307.5 340,306.4 348,305.7 356,304.8 364,303.7 372,303.5 380,303.5 388,303.5 396,303.5 404,303.5 412,303.7 420,304.2 428,304.6 436,304.8 444,305.3 452,305.9 460,306.4 468,307.1 476,308.2 484,309.1 492,309.7 500,309.7 508,309.7 516,309.7 524,309.7 532,309.7 540,309.7 548,309.7 556,309.7 564,309.7 572,309.7 580,310.2 588,310.9 596,310.9 604,311.5 612,311.5 620,312 628,312.5 636,312.5 644,313.1 652,313.5 660,313.8 668,314.2 676,314.7" fill="none" stroke="#ffff00" stroke-width="2" stroke-linejoin="round"/>
<g shape-rendering="crispEdges" clip-path="url(#c2)" fill="#c0c0c0">
<rect x="11" y="514" width="3" height="28"/>
<rect x="19" y="514" width="3" height="25"/>
<rect x="27" y="514" width="3" height="23"/>
<rect x="35" y="514" width="3" height="20"/>
<rect x="43" y="514" width="3" height="19"/>
<rect x="51" y="514" width="3" height="16"/>
<rect x="59" y="514" width="3" height="12"/>
<rect x="67" y="514" width="3" height="12"/>
<rect x="75" y="514" width="3" height="8"/>
<rect x="83" y="514" width="3" height="3"/>
<rect x="91" y="514" width="3" height="3"/>
<rect x="99" y="514" width="3" height="2"/>
<rect x="107" y="514" width="3" height="2"/>
<rect x="115" y="514" width="3" height="4"/>
<rect x="123" y="514" width="3" height="2"/>
<rect x="131" y="514" width="3" height="0"/>
<rect x="139" y="510" width="3" height="5"/>
<rect x="147" y="503" width="3" height="12"/>
<rect x="155" y="499" width="3" height="16"/>
<rect x="163" y="493" width="3" height="22"/>
<rect x="171" y="494" width="3" height="21"/>
<rect x="179" y="487" width="3" height="28"/>
<rect x="187" y="480" width="3" height="35"/>
<rect x="195" y="477" width="3" height="38"/>
<rect x="203" y="475" width="3" height="40"/>
<rect x="211" y="474" width="3" height="41"/>
<rect x="219" y="473" width="3" height="42"/>
<rect x="227" y="472" width="3" height="43"/>
<rect x="235" y="472" width="3" height="43"/>
<rect x="243" y="473" width="3" height="42"/>
<rect x="251" y="471" width="3" height="44"/>
<rect x="259" y="471" width="3" height="44"/>
<rect x="267" y="468" width="3" height="47"/>
<rect x="275" y="468" width="3" height="47"/>
<rect x="283" y="467" width="3" height="48"/>
<rect x="291" y="470" width="3" height="45"/>
<rect x="299" y="474" width="3" height="41"/>
<rect x="307" y="472" width="3" height="43"/>
<rect x="315" y="464" width="3" height="51"/>
<rect x="323" y="461" width="3" height="54"/>
<rect x="331" y="454" width="3" height="61"/>
<rect x="339" y="450" width="3" height="65"/>
<rect x="347" y="450" width="3" height="65"/>
<rect x="355" y="452" width="3" height="63"/>
<rect x="363" y="450" width="3" height="65"/>
<rect x="371" y="441" width="3" height="74"/>
<rect x="379" y="442" width="3" height="73"/>
<rect x="387" y="442" width="3" height="73"/>
<rect x="395" y="446" width="3" height="69"/>
<rect x="403" y="450" width="3" height="65"/>
<rect x="411" y="456" width="3" height="59"/>
<rect x="419" y="461" width="3" height="54"/>
<rect x="427" y="465" width="3" height="50"/>
<rect x="435" y="470" width="3" height="45"/>
<rect x="443" y="473" width="3" height="42"/>
<rect x="451" y="480" width="3" height="35"/>
<rect x="459" y="487" width="3" height="28"/>
<rect x="467" y="492" width="3" height="23"/>
<rect x="475" y="496" width="3" height="19"/>
<rect x="483" y="499" width="3" height="16"/>
<rect x="491" y="498" width="3" height="17"/>
<rect x="499" y="493" width="3" height="22"/>
<rect x="507" y="473" width="3" height="42"/>
<rect x="515" y="457" width="3" height="58"/>
<rect x="523" y="446" width="3" height="69"/>
<rect x="531" y="433" width="3" height="82"/>
<rect x="539" y="426" width="3" height="89"/>
<rect x="547" y="427" width="3" height="88"/>
<rect x="555" y="426" width="3" height="89"/>
<rect x="563" y="425" width="3" height="90"/>
<rect x="571" y="427" width="3" height="88"/>
<rect x="579" y="430" width="3" height="85"/>
<rect x="587" y="433" width="3" height="82"/>
<rect x="595" y="438" width="3" height="77"/>
<rect x="603" y="445" width="3" height="70"/>
<rect x="611" y="450" width="3" height="65"/>
<rect x="619" y="454" width="3" height="61"/>
<rect x="627" y="457" width="3" height="58"/>
<rect x="635" y="460" width="3" height="55"/>
<rect x="643" y="460" width="3" height="55"/>
<rect x="651" y="464" width="3" height="51"/>
<rect x="659" y="465" width="3" height="50"/>
<rect x="667" y="467" width="3" height="48"/>
<rect x="675" y="468" width="3" height="47"/>
</g>
<polyline clip-path="url(#c2)" shape-rendering="crispEdges" points="12,542.4 20,542.4 28,542.4 36,542.4 44,542.4 52,539.1 60,536.9 68,534.4 76,532.3 84,529.3 92,526.5 100,524.7 108,522.7 116,520.6 124,519.3 132,517.3 140,515.5 148,513.7 156,511.5 164,509.5 172,508.1 180,504.3 188,499.8 196,495.4 204,491.3 212,487.5 220,483.7 228,480.8 236,478.8 244,476.4 252,474.6 260,473.7 268,473.1 276,471.9 284,471.5 292,471 300,470.4 308,470.2 316,469.7 324,468.6 332,467.9 340,465.7 348,464.1 356,462.3 364,460.3 372,456 380,452.3 388,449.5 396,447.8 404,447.3 412,447.8 420,449.5 428,450.2 436,453.6 444,457 452,460.8 460,465.9 468,471.5 476,476.4 484,480.9 492,484.9 500,487.6 508,488 516,486.5 524,483.1 532,477.1 540,470.8 548,463 556,455.2 564,447.3 572,440 580,434.4 588,431 596,430.5 604,431.7 612,435 620,437.9 628,440.6 636,444 644,447.3 652,451.4 660,455.6 668,459 676,461.9" fill="none" stroke="#ff0000" stroke-width="2" stroke-linejoin="round"/>
<polygon points="12,545 12,550 17,550" fill="#778899"/>
<g shape-rendering="crispEdges" fill="none" stroke="#fff" stroke-width="1">
<path d="M11.5 550.5 V32.5 H679.5 V550.5 H11.5"/>
<path d="M11 286.5 H680 M11 288.5 H680 M11 416.5 H680 M11 418.5 H680"/>
<path d="M11 287.5 H680 M11 417.5 H680" stroke="#000"/>
<path d="M680 52.5 H682 M680 85.5 H682 M680 118.5 H682 M680 151.5 H682 M680 184.5 H682 M680 217.5 H682 M680 250.5 H682 M680 283.5 H682 M680 290.5 H682 M680 301.5 H682 M680 313.5 H682 M680 330.5 H682 M680 358.5 H682 M680 387.5 H682 M680 404.5 H682 M680 415.5 H682 M680 420.5 H682 M680 514.5 H682 M680 549.5 H682"/>
<path d="M12.5 551 V554 M76.5 551 V554 M140.5 551 V554 M204.5 551 V554 M268.5 551 V554 M332.5 551 V554 M396.5 551 V554 M460.5 551 V554 M524.5 551 V554 M588.5 551 V554 M652.5 551 V554"/>
</g>
<g font-family="&quot;Liberation Sans&quot;, Arial, sans-serif" font-size="9.1px" fill="#fff" stroke="#fff" stroke-width="0.12">
<text x="685.4" y="55.7">1.02610</text>
<text x="685.4" y="88.7">1.02220</text>
<text x="685.4" y="121.7">1.01820</text>
<text x="685.4" y="154.7">1.01430</text>
<text x="685.4" y="187.7">1.01040</text>
<text x="685.4" y="220.7">1.00640</text>
<text x="685.4" y="253.7">1.00250</text>
<text x="685.4" y="286.7">0.99860</text>
<text x="682.6" y="298.8">120</text>
<text x="682.6" y="304.8">100</text>
<text x="682.6" y="317">80</text>
<text x="682.6" y="334">50</text>
<text x="682.6" y="362">0.00</text>
<text x="682.0" y="391">-50</text>
<text x="682.0" y="407.6">-80</text>
<text x="682.8" y="413.6">-100</text>
<text x="683.0" y="429">0.003504</text>
<text x="683.0" y="518">0.00</text>
<text x="682.6" y="547">-0.001291</text>
<text x="11.6" y="563" word-spacing="-0.5px" style="word-spacing:-0.5px">14 Jul 2022</text>
<text x="75.6" y="563" word-spacing="-0.5px" style="word-spacing:-0.5px">15 Jul 04:00</text>
<text x="139.6" y="563" word-spacing="-0.5px" style="word-spacing:-0.5px">15 Jul 12:00</text>
<text x="203.6" y="563" word-spacing="-0.5px" style="word-spacing:-0.5px">15 Jul 20:00</text>
<text x="267.6" y="563" word-spacing="-0.5px" style="word-spacing:-0.5px">18 Jul 04:00</text>
<text x="331.6" y="563" word-spacing="-0.5px" style="word-spacing:-0.5px">18 Jul 12:00</text>
<text x="395.6" y="563" word-spacing="-0.5px" style="word-spacing:-0.5px">18 Jul 20:00</text>
<text x="459.6" y="563" word-spacing="-0.5px" style="word-spacing:-0.5px">19 Jul 04:00</text>
<text x="523.6" y="563" word-spacing="-0.5px" style="word-spacing:-0.5px">19 Jul 12:00</text>
<text x="587.6" y="563" word-spacing="-0.5px" style="word-spacing:-0.5px">19 Jul 20:00</text>
<text x="651.6" y="563" word-spacing="-0.5px" style="word-spacing:-0.5px">20 Jul 04:00</text>
</g>
<g font-family="&quot;Liberation Sans&quot;, Arial, sans-serif" font-size="9.1px" fill="#fff" stroke="#fff" stroke-width="0.12">
<polygon points="15,39 22,39 18.5,43" stroke="none"/>
<text x="27.3" y="44">EURUSD,H1</text>
<text x="87.2" y="44">0.97050</text>
<text x="123.5" y="44">0.97108</text>
<text x="159.4" y="44">0.96942</text>
<text x="195.2" y="44">0.97060</text>
<text x="16.3" y="301.4" font-size="9.3px">R(9,26,52) -55.0 -19.6 31.5</text>
<text x="16.3" y="431" font-size="9.3px">MACD(12,26,9) -0.000126 -0.000098</text>
</g>
</svg>
</div>
</body>
</html>
